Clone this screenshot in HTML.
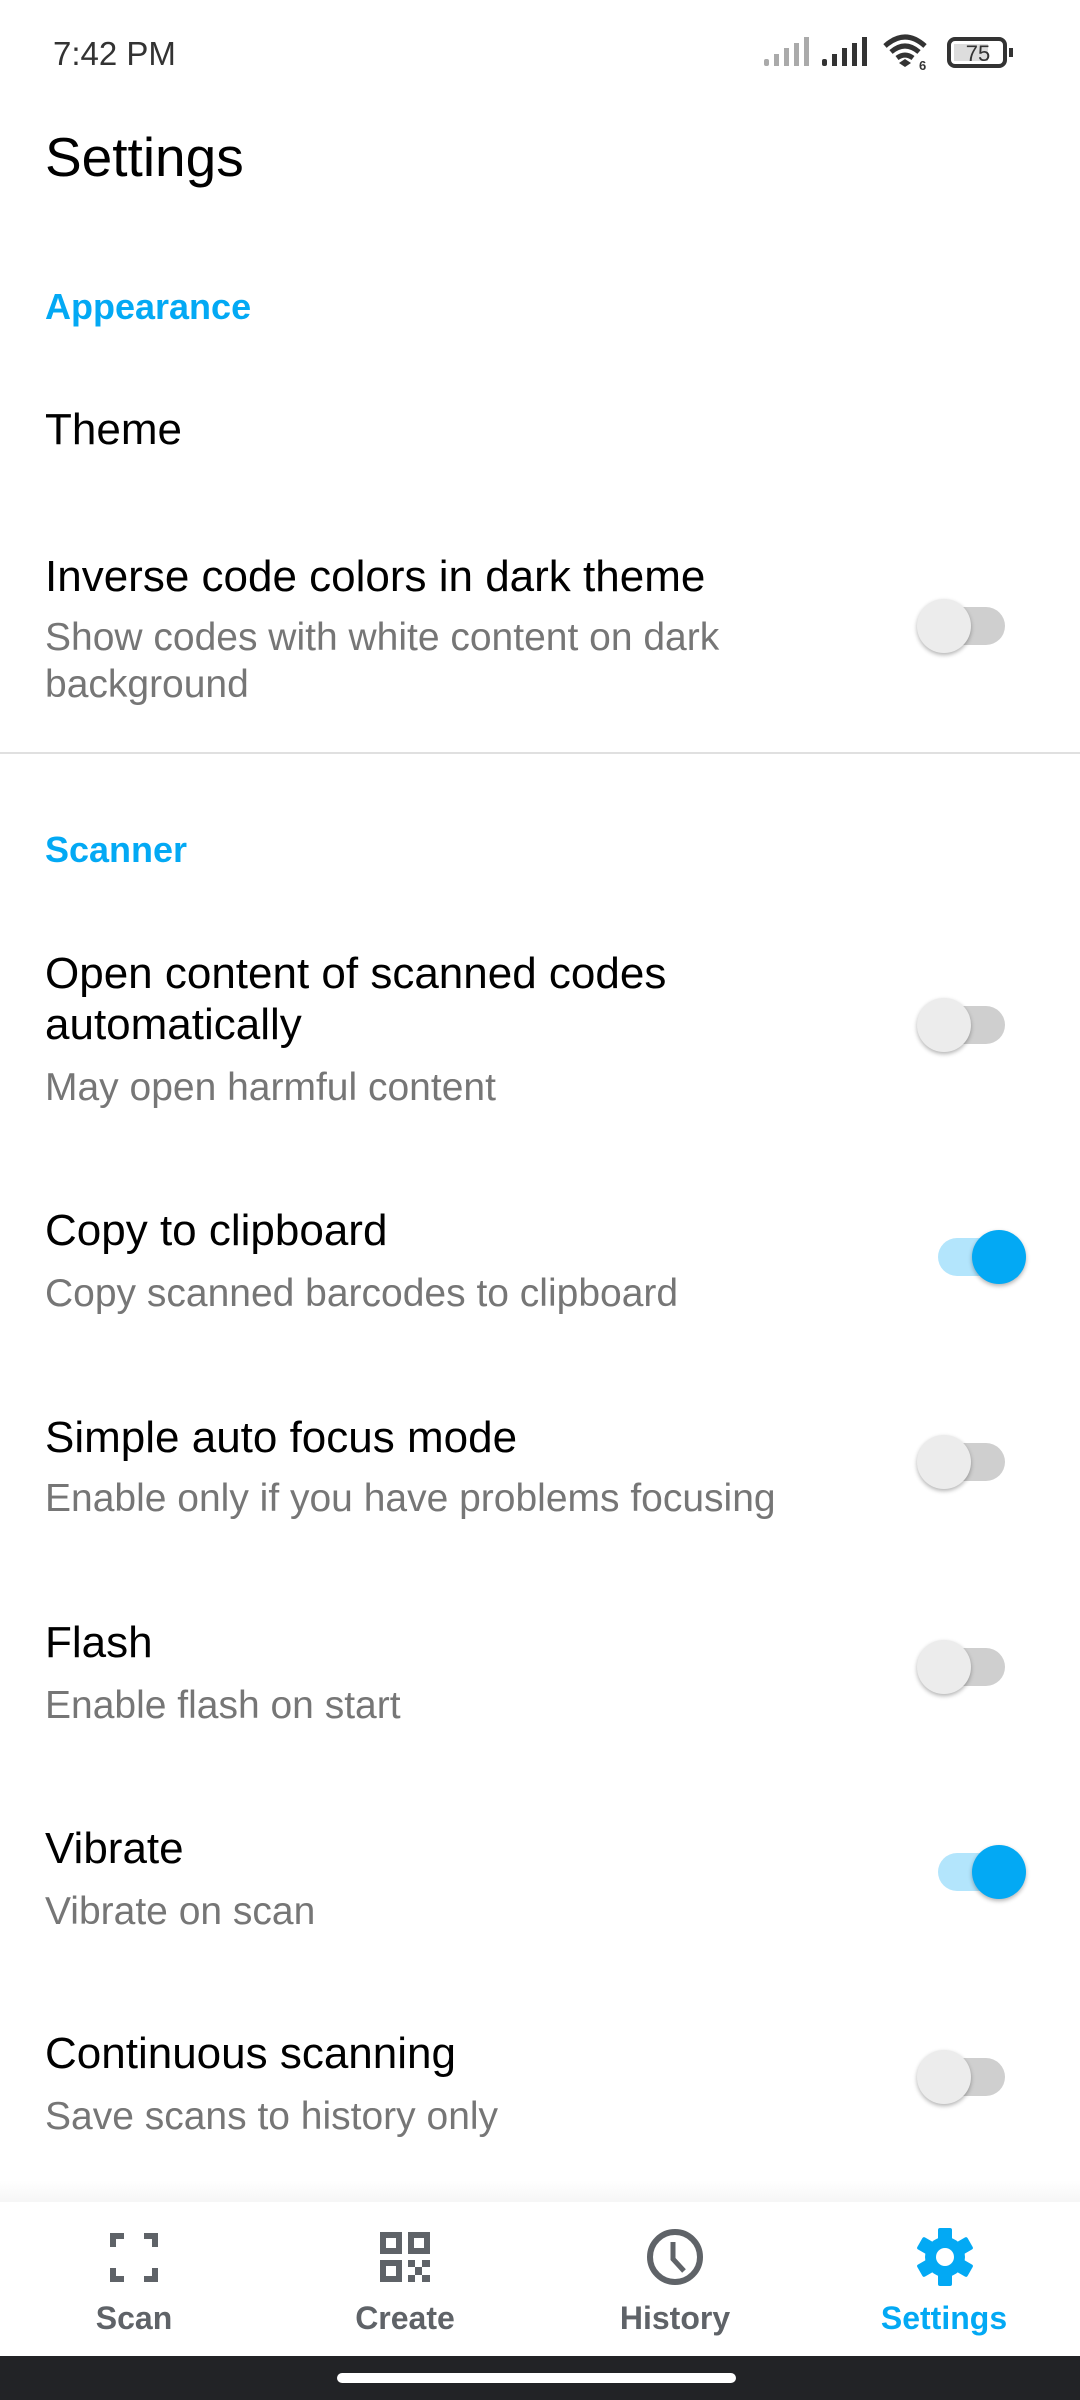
<!DOCTYPE html>
<html><head><meta charset="utf-8"><style>
*{margin:0;padding:0;box-sizing:border-box}
body{width:1080px;height:2400px;background:#fff;position:relative;overflow:hidden;font-family:"Liberation Sans",Roboto,sans-serif}
.t{position:absolute;left:45px;line-height:1;white-space:nowrap}
.h{font-size:44px;color:#000}
.s{font-size:39px;color:#767676}
.c{font-size:36px;color:#03a9f4;font-weight:bold}
.tog{position:absolute;width:67px;height:38px;border-radius:19px;background:#cfcfcf;left:938px}
.tog i{position:absolute;top:-8px;width:54px;height:54px;border-radius:50%;background:#ececec;box-shadow:0 2px 4px rgba(0,0,0,.3)}
.tog.off i{left:-21px}
.tog.on{background:#b3e5fc}
.tog.on i{background:#03a9f4;left:34px}
.nl{position:absolute;top:2300px;font-size:32px;font-weight:bold;color:#5f6368;width:200px;text-align:center}
</style></head><body>
<div class="t" style="top:37px;left:53px;font-size:33px;color:#333">7:42 PM</div>
<svg style="position:absolute;left:760px;top:34px" width="320" height="40" viewBox="0 0 320 40">
<g fill="#aaa"><rect x="4" y="25" width="5" height="7" rx="2"/><rect x="14" y="20" width="5" height="12"/><rect x="24" y="14" width="5" height="18"/><rect x="34" y="9" width="5" height="23"/><rect x="44" y="3" width="5" height="29"/></g>
<g fill="#333"><rect x="62" y="25" width="5" height="7" rx="2"/><rect x="72" y="20" width="5" height="12"/><rect x="82" y="14" width="5" height="18"/><rect x="92" y="9" width="5" height="23"/><rect x="102" y="3" width="5" height="29"/></g>
<g transform="translate(18 0)">
<path d="M107 12 Q127 -6 147 12 M113 18 Q127 6 141 18 M119 24 Q127 18 135 24" stroke="#333" stroke-width="5" fill="none"/>
<path d="M121 29 L127 25 L133 29 L127 33Z" fill="#333"/>
<text x="141" y="36" font-size="13" font-weight="bold" fill="#333" font-family="Liberation Sans">6</text>
</g>
<g transform="translate(20 0)">
<rect x="169" y="5" width="56" height="27" rx="6" fill="none" stroke="#333" stroke-width="4"/>
<rect x="174" y="10" width="34" height="17" fill="#ddd"/>
<rect x="229" y="14" width="4" height="9" fill="#333"/>
<text x="198" y="27" font-size="22" fill="#333" text-anchor="middle" font-family="Liberation Sans">75</text>
</g>
</svg>
<div class="t" style="top:130px;font-size:55px;color:#000">Settings</div>
<div class="t c" style="top:289px">Appearance</div>
<div class="t h" style="top:408px">Theme</div>
<div class="t h" style="top:555px">Inverse code colors in dark theme</div>
<div class="t s" style="top:618px">Show codes with white content on dark</div>
<div class="t s" style="top:665px">background</div>
<div class="tog off" style="top:607px"><i></i></div>
<div style="position:absolute;left:0;top:752px;width:1080px;height:2px;background:#e0e0e0"></div>
<div class="t c" style="top:832px">Scanner</div>
<div class="t h" style="top:952px">Open content of scanned codes</div>
<div class="t h" style="top:1003px">automatically</div>
<div class="t s" style="top:1068px">May open harmful content</div>
<div class="tog off" style="top:1006px"><i></i></div>
<div class="t h" style="top:1209px">Copy to clipboard</div>
<div class="t s" style="top:1274px">Copy scanned barcodes to clipboard</div>
<div class="tog on" style="top:1238px"><i></i></div>
<div class="t h" style="top:1416px">Simple auto focus mode</div>
<div class="t s" style="top:1479px">Enable only if you have problems focusing</div>
<div class="tog off" style="top:1443px"><i></i></div>
<div class="t h" style="top:1621px">Flash</div>
<div class="t s" style="top:1686px">Enable flash on start</div>
<div class="tog off" style="top:1648px"><i></i></div>
<div class="t h" style="top:1827px">Vibrate</div>
<div class="t s" style="top:1892px">Vibrate on scan</div>
<div class="tog on" style="top:1853px"><i></i></div>
<div class="t h" style="top:2032px">Continuous scanning</div>
<div class="t s" style="top:2097px">Save scans to history only</div>
<div class="tog off" style="top:2058px"><i></i></div>
<div style="position:absolute;left:0;top:2180px;width:1080px;height:22px;background:linear-gradient(#fff,#f6f6f6)"></div>
<svg style="position:absolute;left:0;top:2222px" width="1080" height="72">
<g stroke="#5f6368" stroke-width="6" fill="none">
<path d="M113 25 V14 H124 M144 14 H155 V25 M155 46 V57 H144 M124 57 H113 V46"/>
</g>
<g fill="#5f6368">
<path fill-rule="evenodd" d="M380 10h22v22h-22zM386 16v10h10v-10zM408 10h22v22h-22zM414 16v10h10v-10zM380 38h22v22h-22zM386 44v10h10v-10z"/>
<rect x="408" y="38" width="7" height="7"/><rect x="422" y="38" width="8" height="7"/><rect x="415" y="45" width="7" height="8"/><rect x="408" y="53" width="7" height="7"/><rect x="422" y="53" width="8" height="7"/>
</g>
<circle cx="675" cy="35" r="25" stroke="#5f6368" stroke-width="6" fill="none"/>
<path d="M673 20 V37 L684 49" stroke="#5f6368" stroke-width="5" fill="none"/>
<g transform="translate(945 35)" fill="#03a9f4">
<circle r="20"/>
<g id="tooth"><rect x="-7" y="-29" width="14" height="14" rx="2"/></g>
<use href="#tooth" transform="rotate(60)"/><use href="#tooth" transform="rotate(120)"/><use href="#tooth" transform="rotate(180)"/><use href="#tooth" transform="rotate(240)"/><use href="#tooth" transform="rotate(300)"/>
<circle r="9" fill="#fff"/>
</g>
</svg>
<div class="nl" style="left:34px">Scan</div>
<div class="nl" style="left:305px">Create</div>
<div class="nl" style="left:575px">History</div>
<div class="nl" style="left:844px;color:#03a9f4">Settings</div>
<div style="position:absolute;left:0;top:2356px;width:1080px;height:44px;background:#222326"></div>
<div style="position:absolute;left:337px;top:2373px;width:399px;height:10px;border-radius:5px;background:#fff"></div>
</body></html>
